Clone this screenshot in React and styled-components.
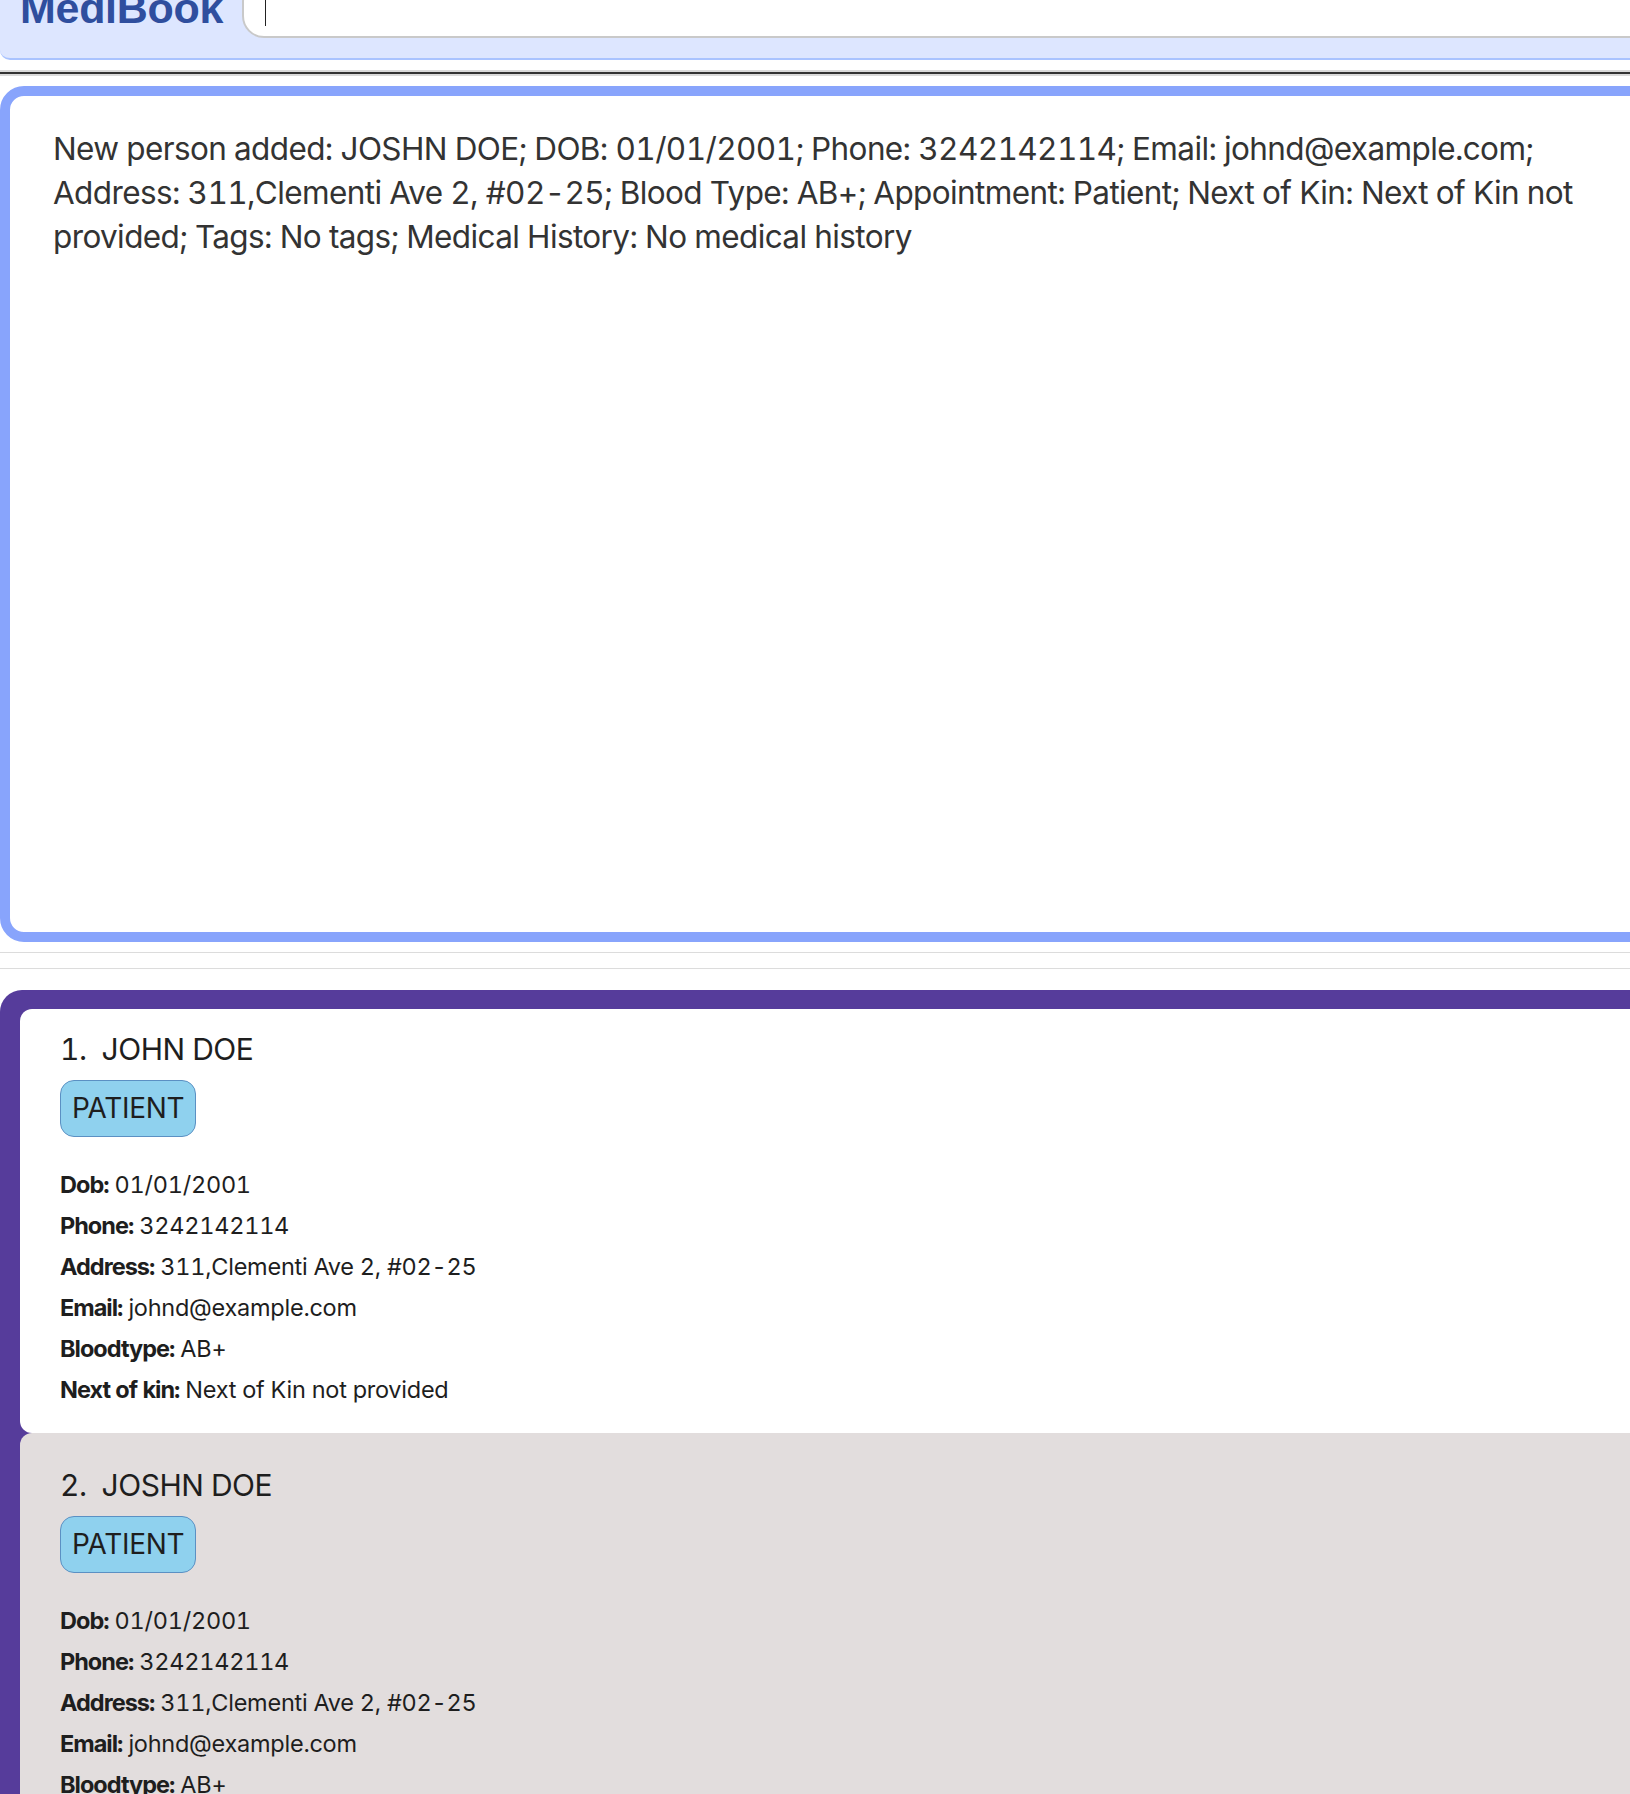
import React from "react";
import styled, { createGlobalStyle } from "styled-components";

const GlobalStyle = createGlobalStyle`
  html, body {
    margin: 0;
    padding: 0;
    background: #ffffff;
    overflow: hidden;
  }
  body {
    font-family: Inter, "Noto Sans", sans-serif;
    font-variant-numeric: tabular-nums;
    color: #222;
  }
`;

const Page = styled.div`
  width: 1700px;
  height: 1794px;
  display: flex;
  flex-direction: column;
`;

const CommandBar = styled.header`
  box-sizing: border-box;
  height: 60px;
  flex: none;
  display: flex;
  align-items: flex-start;
  background: #dde6ff;
  border-bottom: 2px solid #a9c3ff;
  border-bottom-left-radius: 10px;
  overflow: hidden;
`;

const Logo = styled.h1`
  margin: -13px 0 0 0;
  padding-left: 20px;
  font-family: "Liberation Sans", Arial, sans-serif;
  font-weight: 700;
  font-size: 43px;
  line-height: 1;
  color: #2f4e9e;
  letter-spacing: -0.3px;
  white-space: nowrap;
`;

const CommandInput = styled.div`
  box-sizing: border-box;
  flex: 1;
  margin: -20px 0 0 19px;
  height: 58px;
  background: #ffffff;
  border: 2px solid #c9c9c9;
  border-radius: 22px;
  display: flex;
  align-items: flex-start;
`;

const Caret = styled.span`
  display: block;
  width: 1px;
  height: 44px;
  margin-left: 21px;
  background: #222;
`;

const Divider = styled.div`
  flex: none;
  margin-top: 10px;
  height: 2px;
  background: #333333;
  border-top: 2px solid #dadada;
  border-bottom: 2px solid #dadada;
`;

const ResultBox = styled.section`
  box-sizing: border-box;
  flex: none;
  margin-top: 10px;
  height: 856px;
  border: 10px solid #88a4fc;
  border-radius: 24px;
  background: #ffffff;
  padding: 31px 40px 0 43px;
`;

const ResultText = styled.p`
  margin: 0;
  width: 1540px;
  font-family: Inter, sans-serif;
  font-size: 31.5px;
  line-height: 44px;
  letter-spacing: -0.62px;
  color: #333333;
`;

const SplitHandle = styled.div`
  flex: none;
  margin: 10px 0 21px;
  height: 15px;
  border-top: 1px solid #dcdcdc;
  border-bottom: 1px solid #dcdcdc;
`;

const PersonList = styled.section`
  box-sizing: border-box;
  flex: 1;
  min-height: 0;
  background: #563c9b;
  border-top: 19px solid #563c9b;
  border-left: 20px solid #563c9b;
  border-top-left-radius: 22px;
  overflow: hidden;
`;

const ListViewport = styled.div`
  height: 100%;
  overflow: hidden;
  border-top-left-radius: 12px;
`;

const CardStack = styled.div`
  margin-top: -12px;
  display: flex;
  flex-direction: column;
`;

const Card = styled.article`
  box-sizing: border-box;
  height: 436px;
  padding: 32px 0 0 40px;
  border-radius: 12px;
  background: ${(p) => (p.$alt ? "#e2dddd" : "#ffffff")};
`;

const Name = styled.div`
  font-size: 30px;
  line-height: 40px;
  letter-spacing: -0.5px;
  color: #1e1e1e;
  white-space: pre;
`;

const Badge = styled.span`
  box-sizing: border-box;
  display: inline-block;
  margin-top: 11px;
  height: 57px;
  padding: 0 11px;
  border: 1.5px solid #5b90c3;
  border-radius: 14px;
  background: #8fd1ee;
  font-size: 28px;
  line-height: 54px;
  letter-spacing: -0.3px;
  color: #1e1e1e;
`;

const Details = styled.dl`
  margin: 27px 0 0;
  display: flex;
  flex-direction: column;
`;

const Row = styled.div`
  font-size: 23.5px;
  line-height: 41px;
  letter-spacing: -0.25px;
  color: #1e1e1e;
  white-space: nowrap;
`;

const Label = styled.dt`
  display: inline;
  font-weight: 700;
  letter-spacing: -1px;
  margin-right: 6px;
`;

const Value = styled.dd`
  display: inline;
  margin: 0;
`;

const people = [
  { name: "JOHN DOE" },
  { name: "JOSHN DOE" },
];

const fields = () => [
  ["Dob:", "01/01/2001"],
  ["Phone:", "3242142114"],
  ["Address:", "311,Clementi Ave 2, #02-25"],
  ["Email:", "johnd@example.com"],
  ["Bloodtype:", "AB+"],
  ["Next of kin:", "Next of Kin not provided"],
];

export default function App() {
  return (
    <>
      <GlobalStyle />
      <Page>
        <CommandBar>
          <Logo>MediBook</Logo>
          <CommandInput>
            <Caret />
          </CommandInput>
        </CommandBar>
        <Divider />
        <ResultBox>
          <ResultText>
            New person added: JOSHN DOE; DOB: 01/01/2001; Phone: 3242142114; Email: johnd@example.com; Address: 311,Clementi Ave 2, #02-25; Blood Type: AB+; Appointment: Patient; Next of Kin: Next of Kin not provided; Tags: No tags; Medical History: No medical history
          </ResultText>
        </ResultBox>
        <SplitHandle />
        <PersonList>
          <ListViewport>
            <CardStack>
              {people.map((p, i) => (
                <Card key={i} $alt={i % 2 === 1}>
                  <Name>{`${i + 1}.  ${p.name}`}</Name>
                  <Badge>PATIENT</Badge>
                  <Details>
                    {fields().map(([l, v]) => (
                      <Row key={l}>
                        <Label>{l}</Label>
                        <Value>{v}</Value>
                      </Row>
                    ))}
                  </Details>
                </Card>
              ))}
            </CardStack>
          </ListViewport>
        </PersonList>
      </Page>
    </>
  );
}
